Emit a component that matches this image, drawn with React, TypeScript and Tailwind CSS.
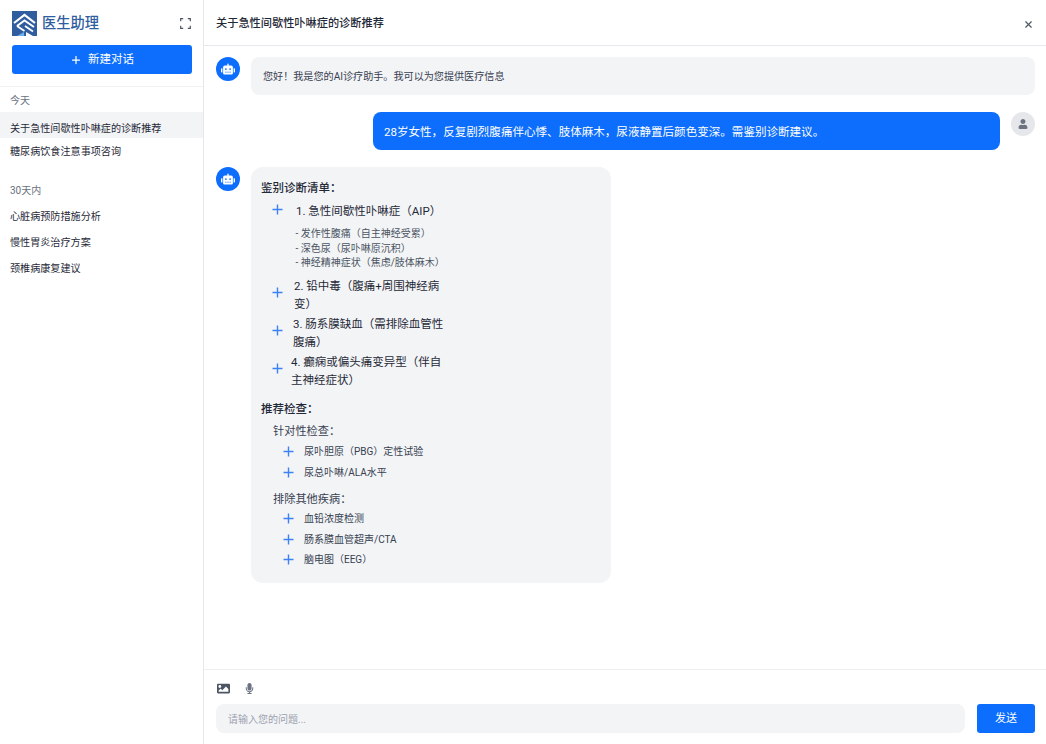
import { Plus } from "lucide-react";
import { FaImage, FaMicrophone, FaRobot, FaUser } from "react-icons/fa";
import { LuX } from "react-icons/lu";

function Logo() {
  return (
    <svg width="25" height="25" viewBox="0 0 25 25" className="shrink-0">
      <rect width="25" height="25" fill="#2f5d9e" />
      <path d="M2 12 L12.5 4 L23 12" fill="none" stroke="#fff" strokeWidth="2.2" />
      <path d="M5 15 L12.5 9.5 L22 16" fill="none" stroke="#fff" strokeWidth="2" />
      <path d="M5 15 L12.5 20 M13 15 L21 20.5" fill="none" stroke="#fff" strokeWidth="1.8" />
      <path d="M5 25 L12 21 L12 25 Z" fill="#6bb0ea" />
      <path d="M14 21 L21 25 L14 25 Z" fill="#fff" />
    </svg>
  );
}

function FullscreenIcon() {
  return (
    <svg width="11" height="11" viewBox="0 0 11 11" fill="none" stroke="#4b5563" strokeWidth="1.2">
      <path d="M0.7 3.2V0.7H3.2M7.8 0.7H10.3V3.2M10.3 7.8V10.3H7.8M3.2 10.3H0.7V7.8" />
    </svg>
  );
}

function BotAvatar() {
  return (
    <div className="w-6 h-6 rounded-full bg-[#0d6efd] flex items-center justify-center text-white shrink-0">
      <FaRobot size={14} />
    </div>
  );
}

function Blue({ className = "" }: { className?: string }) {
  return (
    <svg width="11" height="11" viewBox="0 0 11 11" className={`shrink-0 text-[#3b82f6] ${className}`} fill="none" stroke="currentColor" strokeWidth="1.4">
      <path d="M5.5 0.5V10.5M0.5 5.5H10.5" />
    </svg>
  );
}

function HistoryItem({ label, active }: { label: string; active?: boolean }) {
  return (
    <div className={`h-[26px] px-2.5 flex items-center text-[10.1px] text-[#1f2937] ${active ? "bg-[#f3f4f6] pt-[8px]" : "pt-[2px]"}`}>
      {label}
    </div>
  );
}

function CheckRow({ label }: { label: string }) {
  return (
    <div className="h-[20.5px] flex items-center pl-[22px] text-[10px] text-[#374151]">
      <Blue />
      <span className="ml-[10px]">{label}</span>
    </div>
  );
}

export default function App() {
  return (
    <div className="w-[1046px] h-[744px] flex bg-white overflow-hidden font-['Roboto','Noto_Sans_CJK_SC',sans-serif]">
      {/* Sidebar */}
      <aside className="w-[204px] shrink-0 border-r border-[#e5e7eb] flex flex-col">
        <div className="h-[87px] border-b border-[#f0f1f3] px-3 pt-[11px]">
          <div className="flex items-center">
            <Logo />
            <span className="ml-[5px] text-[14.25px] font-medium text-[#2f5d9e]">医生助理</span>
            <span className="ml-auto">
              <FullscreenIcon />
            </span>
          </div>
          <button className="mt-[9px] w-[180px] h-[29px] pt-[1px] rounded-[3px] bg-[#0d6efd] text-white text-[11.5px] flex items-center justify-center gap-[6px]">
            <Plus size={12} strokeWidth={2.5} />
            新建对话
          </button>
        </div>
        <div className="px-2.5 mt-[7px] text-[10px] leading-[14px] text-[#6b7280]">今天</div>
        <div className="mt-[4px]">
          <HistoryItem label="关于急性间歇性卟啉症的诊断推荐" active />
          <HistoryItem label="糖尿病饮食注意事项咨询" />
        </div>
        <div className="px-2.5 mt-[20px] text-[10px] leading-[14px] text-[#6b7280]">30天内</div>
        <div className="mt-[5px]">
          <HistoryItem label="心脏病预防措施分析" />
          <HistoryItem label="慢性胃炎治疗方案" />
          <HistoryItem label="颈椎病康复建议" />
        </div>
      </aside>

      {/* Main */}
      <main className="flex-1 flex flex-col min-w-0">
        <header className="h-[46px] shrink-0 border-b border-[#e5e7eb] pl-3 pr-3 pt-[3px] flex items-center justify-between">
          <h1 className="text-[11.2px] font-medium text-[#1f2937]">关于急性间歇性卟啉症的诊断推荐</h1>
          <LuX size={11} strokeWidth={2.5} className="text-[#4b5563]" />
        </header>

        <div className="flex-1 min-h-0 pl-[12px] pr-[11px] pt-[11px] flex flex-col">
          <div className="flex gap-[11px]">
            <BotAvatar />
            <div className="flex-1 h-[38px] pt-[1px] rounded-lg bg-[#f3f4f6] pl-3 flex items-center text-[10.1px] text-[#374151]">
              您好！我是您的AI诊疗助手。我可以为您提供医疗信息
            </div>
          </div>

          <div className="flex gap-[11px] justify-end mt-[17px]">
            <div className="w-[627px] h-[38px] pt-[3px] rounded-lg bg-[#0d6efd] pl-[11px] flex items-center text-[11.55px] text-white">
              28岁女性，反复剧烈腹痛伴心悸、肢体麻木，尿液静置后颜色变深。需鉴别诊断建议。
            </div>
            <div className="w-6 h-6 rounded-full bg-[#e5e7eb] flex items-center justify-center text-[#6b7280] shrink-0">
              <FaUser size={10} />
            </div>
          </div>

          <div className="flex gap-[11px] mt-[17px]">
            <BotAvatar />
            <div className="w-[360px] h-[416px] rounded-xl bg-[#f3f4f6] pl-2.5 pt-[14px] text-[#1f2937]">
              <p className="text-[11.5px] leading-[14px] font-medium">鉴别诊断清单：</p>

              <div className="mt-[8px] ml-[11px] flex items-center h-[18px] text-[11.5px]">
                <Blue className="mb-[6px]" />
                <span className="ml-[13px]">1. 急性间歇性卟啉症（AIP）</span>
              </div>
              <div className="mt-[6px] ml-[34.5px] text-[10px] leading-[14.5px] text-[#4b5563]">
                <p>- 发作性腹痛（自主神经受累）</p>
                <p>- 深色尿（尿卟啉原沉积）</p>
                <p>- 神经精神症状（焦虑/肢体麻木）</p>
              </div>

              <div className="mt-[6px] ml-[11px] flex items-center text-[11.5px] leading-[18px]">
                <Blue className="mb-[4px]" />
                <span className="ml-[11px] w-[152px]">2. 铅中毒（腹痛+周围神经病变）</span>
              </div>
              <div className="mt-[2px] ml-[11px] flex items-center text-[11.5px] leading-[18px]">
                <Blue className="mb-[4px]" />
                <span className="ml-[10px] w-[155px]">3. 肠系膜缺血（需排除血管性腹痛）</span>
              </div>
              <div className="mt-[2px] ml-[11px] flex items-center text-[11.5px] leading-[18px]">
                <Blue className="mb-[4px]" />
                <span className="ml-[8px] w-[156px]">4. 癫痫或偏头痛变异型（伴自主神经症状）</span>
              </div>

              <p className="mt-[13px] text-[11.5px] leading-[14px] font-medium">推荐检查：</p>
              <p className="mt-[9px] ml-[12px] text-[11.2px] leading-[14px] text-[#374151]">针对性检查：</p>
              <div className="mt-[3px]">
                <CheckRow label="尿卟胆原（PBG）定性试验" />
                <CheckRow label="尿总卟啉/ALA水平" />
              </div>
              <p className="mt-[10px] ml-[12px] text-[11.2px] leading-[14px] text-[#374151]">排除其他疾病：</p>
              <div className="mt-[2px]">
                <CheckRow label="血铅浓度检测" />
                <CheckRow label="肠系膜血管超声/CTA" />
                <CheckRow label="脑电图（EEG）" />
              </div>
            </div>
          </div>
        </div>

        {/* Composer */}
        <div className="h-[75px] shrink-0 border-t border-[#eeeff1] pl-[12px] pr-[11px] pt-[12px]">
          <div className="flex items-center gap-[14px] pl-[1px] h-[12px] text-[#4b5563]">
            <FaImage size={13} />
            <FaMicrophone size={11} className="text-[#6b7280]" />
          </div>
          <div className="flex gap-3 mt-[10px]">
            <div className="flex-1 h-[29px] pt-[1px] rounded-lg bg-[#f3f4f6] pl-3 flex items-center text-[10px] text-[#9ca3af]">
              请输入您的问题...
            </div>
            <button className="w-[58px] h-[29px] pt-[2px] rounded-[3px] bg-[#0d6efd] text-white text-[11px]">发送</button>
          </div>
        </div>
      </main>
    </div>
  );
}
